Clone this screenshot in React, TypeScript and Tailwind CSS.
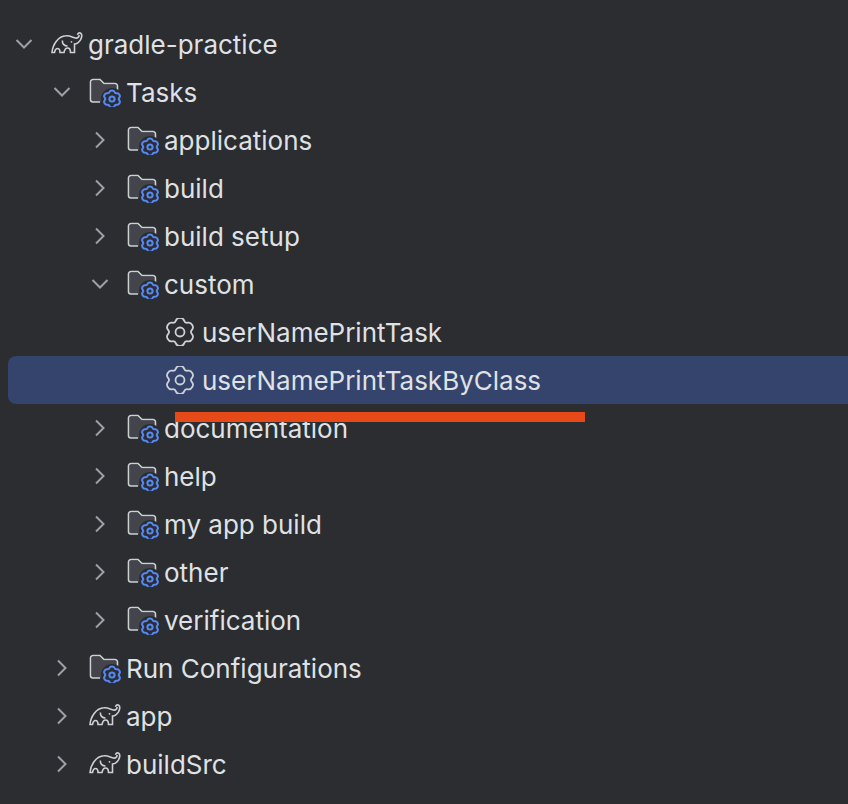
const gearPath = (cx: number, cy: number, outer: number, inner: number) => {
  const pts: number[][] = [];
  for (let i = 0; i < 6; i++) {
    const base = i * 60 - 90;
    [
      [base - 13, outer],
      [base + 13, outer],
      [base + 30, inner],
    ].forEach(([deg, r]) => {
      const a = (deg * Math.PI) / 180;
      pts.push([cx + r * Math.cos(a), cy + r * Math.sin(a)]);
    });
  }
  const mid = (a: number[], b: number[]) => [(a[0] + b[0]) / 2, (a[1] + b[1]) / 2];
  const start = mid(pts[pts.length - 1], pts[0]);
  let d = `M${start[0].toFixed(2)} ${start[1].toFixed(2)}`;
  pts.forEach((p, i) => {
    const m = mid(p, pts[(i + 1) % pts.length]);
    d += `Q${p[0].toFixed(2)} ${p[1].toFixed(2)} ${m[0].toFixed(2)} ${m[1].toFixed(2)}`;
  });
  return d + 'Z';
};

const Chevron = ({ open }: { open: boolean }) => (
  <svg width="20" height="20" viewBox="0 0 20 20" fill="none" stroke="#9da0a8" strokeWidth="2" className="shrink-0">
    {open ? <path d="M2.500 6l7.500 7.500L17.500 6" /> : <path d="M6 2.500l7.500 7.500L6 17.500" />}
  </svg>
);

const FolderIcon = () => (
  <svg width="32" height="30" viewBox="0 0 32 30" fill="none" className="shrink-0">
    <path d="M3 4h8l4 4h11.500a2 2 0 0 1 2 2v15H3z" fill="#43454a" />
    <path
      d="M11 25H4a2.500 2.500 0 0 1-2.500-2.500V5A2.500 2.500 0 0 1 4 2.500h7l4 4h11a2.500 2.500 0 0 1 2.500 2.500v4"
      stroke="#ced0d6"
      strokeWidth="1.600"
    />
    <circle cx="23" cy="22" r="11" fill="#2b2d30" />
    <path d={gearPath(23, 22, 8.800, 6.200)} stroke="#548af7" strokeWidth="2" />
    <circle cx="23" cy="22" r="2.600" stroke="#548af7" strokeWidth="2" />
  </svg>
);

const GradleIcon = () => (
  <svg width="32" height="26" viewBox="0 0 32 26" fill="none" stroke="#ced0d6" strokeWidth="1.600" className="shrink-0">
    <path d="M26.500 3.800C26.800 2.300 28.600 1.200 29.800 2.400C31 3.600 30.800 6.500 29.500 8.800C28 11.300 25.800 12.800 23.500 13V21.500H19.500C19.500 18.500 18.500 17 16.500 17C14.500 17 13.500 19 13 21.500H9C9 19 8 17.500 6.500 17.500C5 17.500 4 19 3.500 21.500H1C1.500 14 7 5 15 4.800C19 4.500 22 6.500 24.500 7C26.500 7.400 28.300 6 28 4" />
    <path d="M11.500 9.500c-.5 3 1.500 5.500 5 5.500" />
    <circle cx="20.500" cy="10.800" r="0.900" fill="#ced0d6" stroke="none" />
  </svg>
);

const GearIcon = () => (
  <svg width="28" height="28" viewBox="0 0 28 28" fill="none" stroke="#ced0d6" strokeWidth="1.800" className="shrink-0">
    <path d={gearPath(14, 14, 14.500, 10)} />
    <circle cx="14" cy="14" r="4.500" />
  </svg>
);

const rows = [
  { label: 'gradle-practice', icon: 'gradle', pad: 'pl-[6px]', chevron: 'open' },
  { label: 'Tasks', icon: 'folder', pad: 'pl-[44px]', chevron: 'open' },
  { label: 'applications', icon: 'folder', pad: 'pl-[82px]', chevron: 'closed' },
  { label: 'build', icon: 'folder', pad: 'pl-[82px]', chevron: 'closed' },
  { label: 'build setup', icon: 'folder', pad: 'pl-[82px]', chevron: 'closed' },
  { label: 'custom', icon: 'folder', pad: 'pl-[82px]', chevron: 'open' },
  { label: 'userNamePrintTask', icon: 'gear', pad: 'pl-[158px]', chevron: 'none' },
  { label: 'userNamePrintTaskByClass', icon: 'gear', pad: 'pl-[158px]', chevron: 'none', selected: true },
  { label: 'documentation', icon: 'folder', pad: 'pl-[82px]', chevron: 'closed' },
  { label: 'help', icon: 'folder', pad: 'pl-[82px]', chevron: 'closed' },
  { label: 'my app build', icon: 'folder', pad: 'pl-[82px]', chevron: 'closed' },
  { label: 'other', icon: 'folder', pad: 'pl-[82px]', chevron: 'closed' },
  { label: 'verification', icon: 'folder', pad: 'pl-[82px]', chevron: 'closed' },
  { label: 'Run Configurations', icon: 'folder', pad: 'pl-[44px]', chevron: 'closed' },
  { label: 'app', icon: 'gradle', pad: 'pl-[44px]', chevron: 'closed' },
  { label: 'buildSrc', icon: 'gradle', pad: 'pl-[44px]', chevron: 'closed' },
];

export default function App() {
  return (
    <div className="relative w-[848px] h-[804px] overflow-hidden bg-[#2b2d30] pt-[20px] pl-[8px] font-['Inter',sans-serif] text-[26px] text-[#dfe1e5]">
      {rows.map((r) => (
        <div
          key={r.label}
          className={`flex items-center h-[48px] ${r.pad} ${r.selected ? 'bg-[#34446c] rounded-l-[8px]' : ''}`}
        >
          {r.chevron !== 'none' && (
            <div className="w-[37px] shrink-0">
              <Chevron open={r.chevron === 'open'} />
            </div>
          )}
          {r.icon === 'gradle' && <GradleIcon />}
          {r.icon === 'folder' && <FolderIcon />}
          {r.icon === 'gear' && <GearIcon />}
          <span className={`whitespace-nowrap ${r.icon === 'gear' ? 'ml-[8px]' : 'ml-[5px]'}`}>{r.label}</span>
        </div>
      ))}
      <div className="absolute left-[175px] top-[412px] w-[410px] h-[10px] bg-[#e64a19]" />
    </div>
  );
}
